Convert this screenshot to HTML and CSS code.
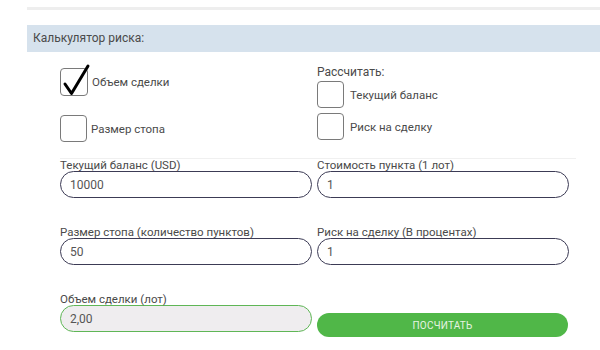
FILE: index.html
```html
<!DOCTYPE html>
<html lang="ru">
<head>
  <meta charset="UTF-8" />
  <meta name="viewport" content="width=device-width, initial-scale=1.0"/>
  <title>Калькулятор риска</title>
  <link rel="stylesheet" href="styles.css">
</head>
<body>
  <div class="page">
    <div class="top-line"></div>
    <div class="panel-title">Калькулятор риска:</div>

    <div class="calc">
      <div class="modes">
        <div class="col">
          <label class="check">
            <span class="box checked">
              <svg class="tick" width="30" height="34" viewBox="0 0 30 34"><path d="M4 21 L10.5 30.5 L27 3" fill="none" stroke="#000" stroke-width="3" stroke-linecap="round" stroke-linejoin="round"/></svg>
            </span>
            Объем сделки
          </label>
          <label class="check">
            <span class="box"></span>
            Размер стопа
          </label>
        </div>
        <div class="col col-right">
          <div class="col-title">Рассчитать:</div>
          <label class="check">
            <span class="box"></span>
            Текущий баланс
          </label>
          <label class="check">
            <span class="box"></span>
            Риск на сделку
          </label>
        </div>
      </div>

      <div class="sep"></div>

      <div class="fields">
        <div class="field">
          <div class="field-label">Текущий баланс (USD)</div>
          <input class="inp" type="text" value="10000">
        </div>
        <div class="field">
          <div class="field-label">Стоимость пункта (1 лот)</div>
          <input class="inp" type="text" value="1">
        </div>
        <div class="field">
          <div class="field-label">Размер стопа (количество пунктов)</div>
          <input class="inp" type="text" value="50">
        </div>
        <div class="field">
          <div class="field-label">Риск на сделку (В процентах)</div>
          <input class="inp" type="text" value="1">
        </div>
        <div class="field">
          <div class="field-label">Объем сделки (лот)</div>
          <input class="inp result" type="text" value="2,00" readonly>
        </div>
        <div class="field">
          <button class="calc-btn" type="button">ПОСЧИТАТЬ</button>
        </div>
      </div>
    </div>
  </div>
</body>
</html>
```

FILE: styles.css
```css
body {margin: 0; padding: 0; background: #fff; font-family: Roboto, "Liberation Sans", Arial, sans-serif; color: #444; overflow: hidden;}
.page {margin-left: 27px; padding-top: 7px;}
.top-line {height: 3px; background: #eeeeee;}
.panel-title {margin-top: 15px; height: 27px; line-height: 27px; padding-left: 6px; background: #d6e2ed; font-size: 12px; color: #4a4a4a;}

.calc {padding-left: 33px; width: 516px;}
/* checkbox block */
.modes {display: grid; grid-template-columns: 252px 252px; column-gap: 5px; padding-top: 16px;}
.col {display: flex; flex-direction: column; gap: 19px;}
.col-right {gap: 5px; margin-top: -3px;}
.col-title {font-size: 12px; line-height: 14px; margin-bottom: -3px; color: #4a4a4a;}
.check {display: flex; align-items: center; gap: 4px; font-size: 11.5px; color: #4a4a4a; cursor: pointer;}
.col-right .check {gap: 6px;}
.box {position: relative; width: 25px; height: 25px; border: 1px solid #7a7a7a; border-radius: 4px; flex-shrink: 0;}
.box.checked {width: 26px; height: 26px;}
.tick {position: absolute; left: 0; top: -6px;}

.sep {height: 1px; background: #f0f0f0; margin-top: 16px;}

/* fields */
.fields {display: grid; grid-template-columns: 252px 252px; column-gap: 5px; row-gap: 28px;}
.field-label {font-size: 11.5px; line-height: 12px; color: #4a4a4a; white-space: nowrap;}
.inp {display: block; box-sizing: border-box; width: 252px; height: 27px; border: 1.5px solid #3c3b55; border-radius: 14px; padding: 0 9px; font-family: inherit; font-size: 12px; color: #555; background: #fff; outline: none;}
.inp.result {background: #efedef; border-color: #5fb656;}
.calc-btn {display: block; width: 251px; height: 24px; margin-top: 20px; border: none; border-radius: 12px; background: #50b748; color: #e6f3e2; font-family: inherit; font-size: 10px; letter-spacing: 0.2px; cursor: pointer;}
```
